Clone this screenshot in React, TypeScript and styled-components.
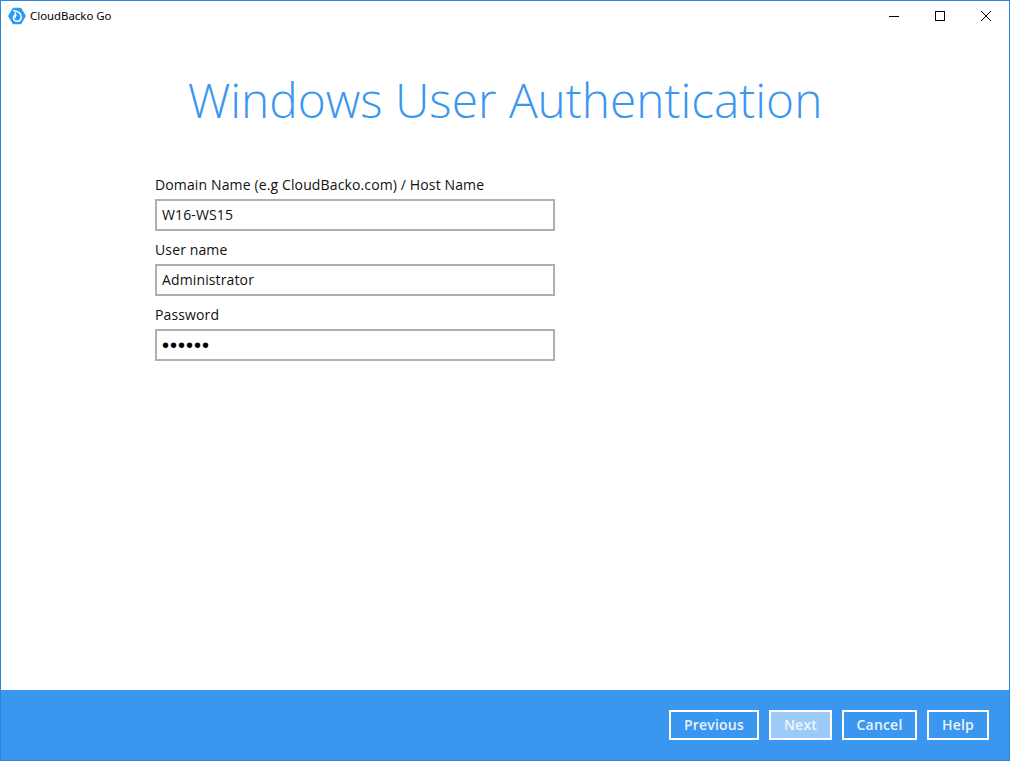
import React from "react";
import styled, { createGlobalStyle } from "styled-components";

const Global = createGlobalStyle`
  html, body { margin: 0; padding: 0; background: #fff; }
  * { box-sizing: border-box; }
`;

const Window = styled.div`
  width: 1010px;
  height: 761px;
  border: 1px solid #2b87da;
  display: flex;
  flex-direction: column;
  font-family: "Open Sans", "Noto Sans", sans-serif;
  color: #111;
  background: #fff;
`;

const TitleBar = styled.div`
  height: 30px;
  display: flex;
  align-items: center;
  padding-left: 7px;
`;

const AppName = styled.span`
  font-family: "Noto Sans", sans-serif;
  font-size: 11.4px;
  margin-left: 4px;
  margin-top: -1px;
  color: #000;
  flex: 1;
`;

const WinBtn = styled.div`
  width: 46px;
  height: 30px;
  display: flex;
  align-items: center;
  justify-content: center;
`;

const Main = styled.div`
  flex: 1;
  display: flex;
  flex-direction: column;
`;

const Heading = styled.h1`
  margin: 29px 0 0;
  font-size: 47.8px;
  line-height: 80px;
  font-weight: 300;
  text-align: center;
  color: #3b96ef;
`;

const Form = styled.div`
  width: 400px;
  margin: 35px 0 0 154px;
  display: flex;
  flex-direction: column;
`;

const Label = styled.div`
  font-size: 14px;
  letter-spacing: 0.13px;
  line-height: 19px;
  margin-top: 9px;
  margin-bottom: 5px;
  &:first-child { margin-top: 0; }
`;

const Field = styled.div`
  height: 32px;
  border: 2px solid #b0b0b0;
  padding-left: 5px;
  font-size: 14px;
  letter-spacing: 0.13px;
  line-height: 27px;
  color: #111;
`;

const Dots = styled.span`
  font-family: "Liberation Sans", sans-serif;
  font-size: 20px;
  letter-spacing: 1px;
  vertical-align: -2px;
  color: #000;
`;

const Footer = styled.div`
  height: 70px;
  background: #3b96ef;
  display: flex;
  align-items: center;
  justify-content: flex-end;
  gap: 10px;
  padding-right: 20px;
`;

const Button = styled.div<{ $disabled?: boolean; $w: number }>`
  width: ${(p) => p.$w}px;
  height: 30px;
  padding-bottom: 2px;
  border: 2px solid #fff;
  color: ${(p) => (p.$disabled ? "#eef6fe" : "#e9f4fe")};
  background: ${(p) => (p.$disabled ? "#9dcbf8" : "transparent")};
  font-size: 14px;
  font-weight: 600;
  letter-spacing: 0.2px;
  display: flex;
  align-items: center;
  justify-content: center;
`;

const Logo = () => (
  <svg width="18" height="18" viewBox="0 0 18 18">
    <path d="M5.5 1.5h7L17 9l-4.5 7.5h-7L1 9z" fill="#2b9af3" stroke="#2b9af3" strokeWidth="1.6" strokeLinejoin="round" />
    <path d="M5.2 3.6c4 .6 8 2.6 8 6.4 0 2.6-2 4.2-4.4 4.2-2 0-3.4-1.4-3.4-3.2 0-1.8 1.4-3.1 3.2-3.1" fill="none" stroke="#fff" strokeWidth="1.5" />
    <path d="M7.2 5.2v6" fill="none" stroke="#fff" strokeWidth="1.4" />
  </svg>
);

export default function App() {
  return (
    <>
      <Global />
      <Window>
        <TitleBar>
          <Logo />
          <AppName>CloudBacko Go</AppName>
          <WinBtn>
            <svg width="10" height="10" viewBox="0 0 10 10"><path d="M0 5.5h10" stroke="#000" strokeWidth="1" /></svg>
          </WinBtn>
          <WinBtn>
            <svg width="10" height="10" viewBox="0 0 10 10"><rect x="0.5" y="0.5" width="9" height="9" fill="none" stroke="#000" /></svg>
          </WinBtn>
          <WinBtn>
            <svg width="10" height="10" viewBox="0 0 10 10"><path d="M0 0l10 10M10 0L0 10" stroke="#000" strokeWidth="1" /></svg>
          </WinBtn>
        </TitleBar>
        <Main>
          <Heading>Windows User Authentication</Heading>
          <Form>
            <Label>Domain Name (e.g CloudBacko.com) / Host Name</Label>
            <Field>W16-WS15</Field>
            <Label>User name</Label>
            <Field>Administrator</Field>
            <Label>Password</Label>
            <Field><Dots>••••••</Dots></Field>
          </Form>
        </Main>
        <Footer>
          <Button $w={90}>Previous</Button>
          <Button $w={63} $disabled>Next</Button>
          <Button $w={75}>Cancel</Button>
          <Button $w={62}>Help</Button>
        </Footer>
      </Window>
    </>
  );
}
